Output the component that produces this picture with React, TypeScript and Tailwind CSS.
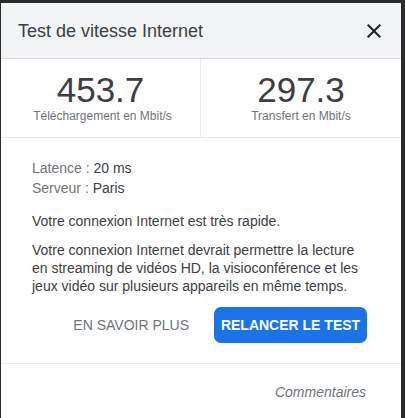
import React from "react";

export default function App() {
  const font = { fontFamily: '"Liberation Sans", Arial, sans-serif' };
  return (
    <div className="w-[405px] h-[418px] bg-[#2b2b2b] overflow-hidden" style={font}>
      <div className="ml-[1px] mt-[3px] w-[400px] h-[415px] bg-white flex flex-col">
        {/* Header */}
        <div className="h-[56px] bg-[#f1f3f4] border-b border-[#dadce0] flex items-center justify-between pl-[17px] pr-[15px]">
          <div className="text-[18px] leading-[24px] text-[#3c4043] pt-[1px]">Test de vitesse Internet</div>
          <svg width="24" height="24" viewBox="0 0 24 24" className="text-[#202124]">
            <path
              fill="currentColor"
              d="M19 6.41L17.59 5 12 10.59 6.41 5 5 6.41 10.59 12 5 17.59 6.41 19 12 13.41 17.59 19 19 17.59 13.41 12z"
            />
          </svg>
        </div>

        {/* Stats */}
        <div className="grid grid-cols-2 h-[79px] border-b border-[#ebebeb]">
          <div className="flex flex-col items-center pt-[13px] border-r border-[#ebebeb]">
            <div className="text-[35px] leading-[35px] text-[#3c4043]">453.7</div>
            <div className="mt-[2px] text-[12px] leading-[14px] text-[#70757a] pl-[4px]">Téléchargement en Mbit/s</div>
          </div>
          <div className="flex flex-col items-center pt-[13px]">
            <div className="text-[35px] leading-[35px] text-[#3c4043]">297.3</div>
            <div className="mt-[2px] text-[12px] leading-[14px] text-[#70757a]">Transfert en Mbit/s</div>
          </div>
        </div>

        {/* Body */}
        <div className="pl-[31px] pr-[34px] pt-[20px] text-[14px]">
          <div className="leading-[20px]">
            <span className="text-[#70757a]">Latence : </span>
            <span className="text-[#3c4043]">20 ms</span>
          </div>
          <div className="leading-[20px]">
            <span className="text-[#70757a]">Serveur : </span>
            <span className="text-[#3c4043]">Paris</span>
          </div>
          <p className="mt-[14px] text-[14px] leading-[18px] text-[#3c4043]">Votre connexion Internet est très rapide.</p>
          <p className="mt-[11px] text-[14px] leading-[18px] text-[#3c4043] w-[332px]">
            Votre connexion Internet devrait permettre la lecture en streaming de vidéos HD, la visioconférence et les jeux vidéo sur plusieurs appareils en même temps.
          </p>
          <div className="mt-[12px] flex justify-end items-center">
            <button className="text-[14px] leading-[20px] text-[#70757a] mr-[25px]">EN SAVOIR PLUS</button>
            <button className="w-[153px] h-[36px] rounded-[7px] bg-[#1a73e8] text-white text-[14px] font-bold leading-[20px] flex items-center justify-center">
              RELANCER LE TEST
            </button>
          </div>
        </div>

        <div className="mt-[20px] border-t border-[#ebebeb] pt-[18px] pr-[35px] flex justify-end">
          <span className="italic text-[14px] leading-[20px] text-[#70757a]">Commentaires</span>
        </div>
      </div>
    </div>
  );
}
